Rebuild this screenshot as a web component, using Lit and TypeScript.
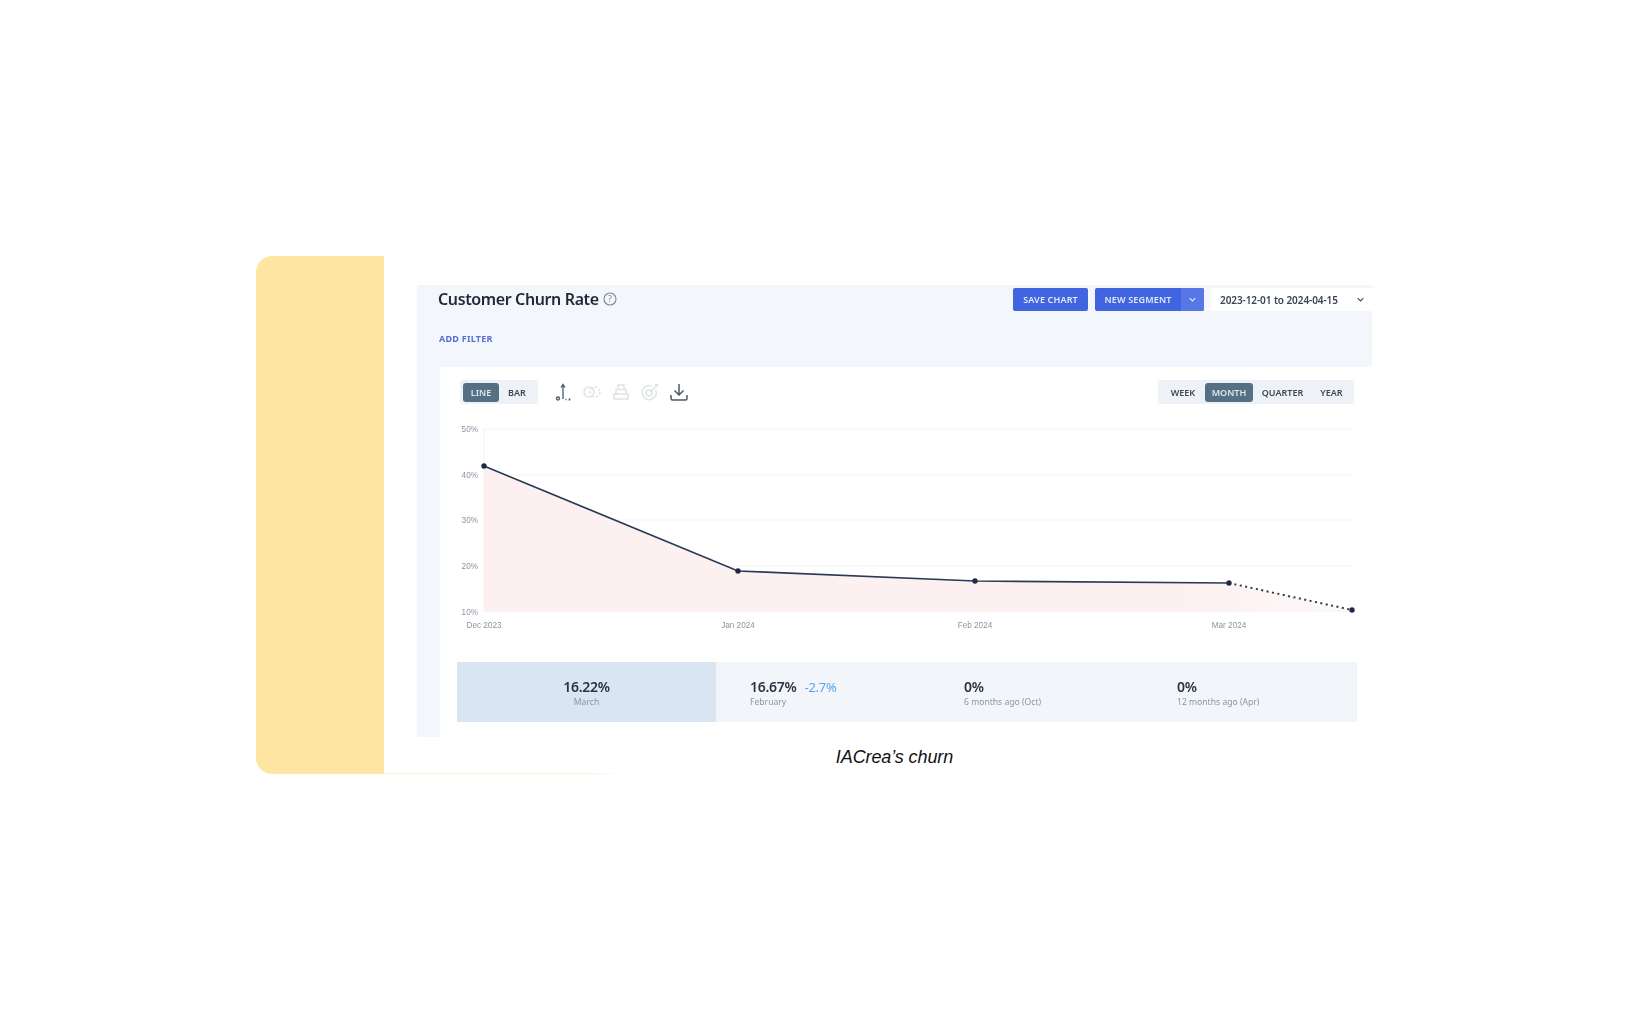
import {LitElement, html, css, svg} from 'lit';
import {customElement} from 'lit/decorators.js';

// chart geometry, in page pixels (the svg viewBox starts at the card's corner)
const GRID = [
  {label: '50%', y: 429},
  {label: '40%', y: 475},
  {label: '30%', y: 520},
  {label: '20%', y: 566},
  {label: '10%', y: 611.5},
];
const POINTS = [
  {x: 484, y: 466, label: 'Dec 2023'},
  {x: 738, y: 571, label: 'Jan 2024'},
  {x: 975, y: 581, label: 'Feb 2024'},
  {x: 1229, y: 583, label: 'Mar 2024'},
  {x: 1352, y: 610, label: ''},
];

const STATS = [
  {value: '16.67%', delta: '-2.7%', label: 'February'},
  {value: '0%', delta: '', label: '6 months ago (Oct)'},
  {value: '0%', delta: '', label: '12 months ago (Apr)'},
];

const chevron = html`<svg class="chev" viewBox="0 0 10 6" width="7" height="5"><path d="M1 1l4 4 4-4" fill="none" stroke="currentColor" stroke-width="1.5"/></svg>`;

@customElement('app-root')
export class AppRoot extends LitElement {
  static styles = css`
    :host {
      display: block;
      height: 1030px;
      background: #fff;
      font-family: "Noto Sans", "Liberation Sans", sans-serif;
      color: #27303f;
    }
    .frame {
      display: flex;
      width: 1120px;
      height: 518px;
      padding: 256px 0 0 256px;
    }
    .side {
      width: 128px;
      background: #fee5a1;
      border-radius: 16px 0 0 16px;
    }
    .main {
      display: flex;
      flex-direction: column;
      flex: 1;
    }
    .dash {
      width: 955px;
      margin: 29px 0 0 33px;
      filter: blur(0.45px);
    }
    .head {
      height: 82px;
      background: #f3f6fa;
      padding: 3px 0 0 21px;
      box-sizing: border-box;
    }
    .head-top {
      display: flex;
      align-items: center;
      height: 23px;
    }
    h1 {
      margin: 0 0 2px;
      font-size: 16px;
      font-weight: 600;
      letter-spacing: -0.38px;
      color: #1f2937;
    }
    .help { margin: 0 0 2px 3px; }
    .actions {
      display: flex;
      align-items: center;
      gap: 7px;
      margin-left: auto;
    }
    .btn {
      display: flex;
      align-items: center;
      height: 23px;
      border-radius: 2px;
      background: #4164e0;
      color: #e6ebfb;
      font-size: 9px;
      font-weight: 600;
      letter-spacing: 0.15px;
    }
    .btn.save { width: 75px; justify-content: center; }
    .btn.seg { width: 109px; }
    .btn.seg span { flex: 1; text-align: center; }
    .btn.seg i {
      display: flex;
      align-items: center;
      justify-content: center;
      width: 23px;
      height: 100%;
      background: #5677e6;
      border-radius: 0 2px 2px 0;
    }
    .date {
      display: flex;
      align-items: center;
      justify-content: space-between;
      width: 161px;
      height: 23px;
      box-sizing: border-box;
      padding: 0 8px 0 9px;
      background: #fff;
      font-size: 10px;
      font-weight: 600;
      letter-spacing: -0.08px;
      color: #3a4453;
    }
    .add {
      margin: 21px 0 0 1px;
      font-size: 9px;
      font-weight: 700;
      letter-spacing: 0.25px;
      color: #5a6fd8;
    }
    .body {
      height: 370px;
      box-sizing: border-box;
      padding-left: 23px;
      background: linear-gradient(90deg, #f3f6fa 23px, #fff 23px);
    }
    .card {
      height: 100%;
      background: #fff;
    }
    .tools {
      display: flex;
      align-items: center;
      height: 24px;
      padding: 13px 18px 0 20px;
    }
    .seg-group {
      display: flex;
      align-items: center;
      height: 24px;
      padding: 0 3px;
      box-sizing: border-box;
      border-radius: 3px;
      background: #eef2f6;
      font-size: 9px;
      font-weight: 600;
      color: #3c4656;
    }
    .seg-group b {
      display: flex;
      align-items: center;
      justify-content: center;
      height: 19px;
      font-weight: 600;
      border-radius: 3px;
    }
    .seg-group b.on {
      background: #557083;
      color: #dfe6ec;
    }
    .kind b { width: 36px; }
    .icons {
      display: flex;
      gap: 5px;
      margin-left: 13px;
    }
    .period { margin-left: auto; }
    .period b { padding: 0 8.5px; }
    .period b:first-child { padding: 0 9.5px; }
    .period b.on { padding: 0 7px; }
    .chart {
      display: block;
      margin: 14px 0 0 -23px;
    }
    .chart text {
      font-family: "Liberation Sans", sans-serif;
      font-size: 8.2px;
      fill: #8b95a1;
    }
    .stats {
      display: grid;
      grid-template-columns: 259px 214px 213px 1fr;
      height: 60px;
      margin: 4px 15px 0 17px;
      background: #f2f6fa;
    }
    .stat {
      display: flex;
      flex-direction: column;
      justify-content: center;
      padding: 1px 0 0 34px;
    }
    .stat.on {
      align-items: center;
      padding-left: 0;
      background: #d9e5f0;
    }
    .val {
      font-size: 14px;
      font-weight: 600;
      line-height: 18px;
      letter-spacing: -0.27px;
      color: #2b3442;
    }
    .val em {
      margin-left: 8px;
      font-style: normal;
      font-size: 13px;
      font-weight: 400;
      color: #5aa6e8;
    }
    .lab {
      font-size: 8.6px;
      line-height: 12px;
      color: #8a95a2;
    }
    .cap {
      width: 955px;
      margin: 9px 0 0 33px;
      font: italic 18px/22px "Liberation Sans", sans-serif;
      letter-spacing: -0.1px;
      color: #111;
      text-align: center;
    }
    .rule {
      width: 246px;
      height: 1px;
      margin-top: auto;
      background: linear-gradient(90deg, #fdf1d4 80%, #fff);
    }
  `;

  private _icons() {
    const dark = '#4b5a68';
    const pale = '#dfe3e6';
    return html`<div class="icons">
      <svg width="24" height="24" viewBox="0 0 24 24" fill="none" stroke=${dark} stroke-width="1.3">
        <path d="M12 19V5M10 7.500L12 4.500l2 3"/>
        <circle cx="7" cy="18.500" r="1.500"/>
        <path d="M14.500 19.500h1M18.500 18.500v2" stroke-width="1.600"/>
      </svg>
      <svg width="24" height="24" viewBox="0 0 24 24" fill="none" stroke=${pale} stroke-width="1.500">
        <circle cx="9" cy="12" r="5"/>
        <circle cx="15" cy="12" r="5" stroke-dasharray="3 1.500"/>
      </svg>
      <svg width="24" height="24" viewBox="0 0 24 24" fill="none" stroke=${pale} stroke-width="1.500">
        <path d="M9 5h6v4.500H9zM7 9.500h10V14H7zM5 14h14v5H5z"/>
      </svg>
      <svg width="24" height="24" viewBox="0 0 24 24" fill="none" stroke=${pale} stroke-width="1.500">
        <path d="M17.500 9.500a7 7 0 1 1-4-3.500"/>
        <circle cx="11" cy="13" r="3"/>
        <path d="M12 12l7-7M17 4.500h2.500V7"/>
      </svg>
      <svg width="24" height="24" viewBox="0 0 24 24" fill="none" stroke=${dark} stroke-width="1.500">
        <path d="M12 4v11M7.500 10.500L12 15l4.500-4.500M4 15v3.500q0 1.500 1.500 1.500h13q1.500 0 1.500-1.500V15"/>
      </svg>
    </div>`;
  }

  private _chart() {
    const solid = POINTS.slice(0, 4).map(p => `${p.x},${p.y}`).join(' ');
    const all = POINTS.map(p => `${p.x},${p.y}`).join(' ');
    const area = `${all} 1352,611.5 484,611.5`;
    return html`<svg class="chart" width="955" height="240" viewBox="417 418 955 240">
      <defs>
        <linearGradient id="fade" x1="0" x2="1" y1="0" y2="0">
          <stop offset="0.8" stop-color="#fdf0f1"/>
          <stop offset="1" stop-color="#fef8f8"/>
        </linearGradient>
      </defs>
      ${GRID.map(g => svg`
        <line x1="484" x2="1355" y1=${g.y} y2=${g.y} stroke="#f4f5f7"/>
        <text x="478" y=${g.y + 3} text-anchor="end">${g.label}</text>`)}
      <line x1="484" x2="484" y1="429" y2="611" stroke="#f1f2f4"/>
      <polygon points=${area} fill="url(#fade)"/>
      <polyline points=${solid} fill="none" stroke="#2a3a55" stroke-width="1.700"/>
      <line x1="1229" y1="583" x2="1352" y2="610" stroke="#2f3a4c" stroke-width="2" stroke-dasharray="2 3.500"/>
      ${POINTS.map(p => svg`
        <circle cx=${p.x} cy=${p.y} r="2.700" fill="#1d2a44"/>
        <text x=${p.x} y="628" text-anchor="middle">${p.label}</text>`)}
    </svg>`;
  }

  render() {
    return html`
      <div class="frame">
        <div class="side"></div>
        <div class="main">
          <div class="dash">
            <div class="head">
              <div class="head-top">
                <h1>Customer Churn Rate</h1>
                <svg class="help" width="16" height="16" viewBox="0 0 16 16">
                  <circle cx="8" cy="8" r="6" fill="none" stroke="#7c8794" stroke-width="1.100"/>
                  <text x="8" y="11" text-anchor="middle" font-size="9" fill="#7c8794">?</text>
                </svg>
                <div class="actions">
                  <div class="btn save">SAVE CHART</div>
                  <div class="btn seg"><span>NEW SEGMENT</span><i>${chevron}</i></div>
                  <div class="date"><span>2023-12-01 to 2024-04-15</span>${chevron}</div>
                </div>
              </div>
              <div class="add">ADD FILTER</div>
            </div>
            <div class="body">
              <div class="card">
                <div class="tools">
                  <div class="seg-group kind"><b class="on">LINE</b><b>BAR</b></div>
                  ${this._icons()}
                  <div class="seg-group period">
                    <b>WEEK</b><b class="on">MONTH</b><b>QUARTER</b><b>YEAR</b>
                  </div>
                </div>
                ${this._chart()}
                <div class="stats">
                  <div class="stat on">
                    <div class="val">16.22%</div>
                    <div class="lab">March</div>
                  </div>
                  ${STATS.map(s => html`<div class="stat">
                    <div class="val">${s.value}${s.delta ? html`<em>${s.delta}</em>` : ''}</div>
                    <div class="lab">${s.label}</div>
                  </div>`)}
                </div>
              </div>
            </div>
          </div>
          <div class="cap">IACrea’s churn</div>
          <div class="rule"></div>
        </div>
      </div>
    `;
  }
}
